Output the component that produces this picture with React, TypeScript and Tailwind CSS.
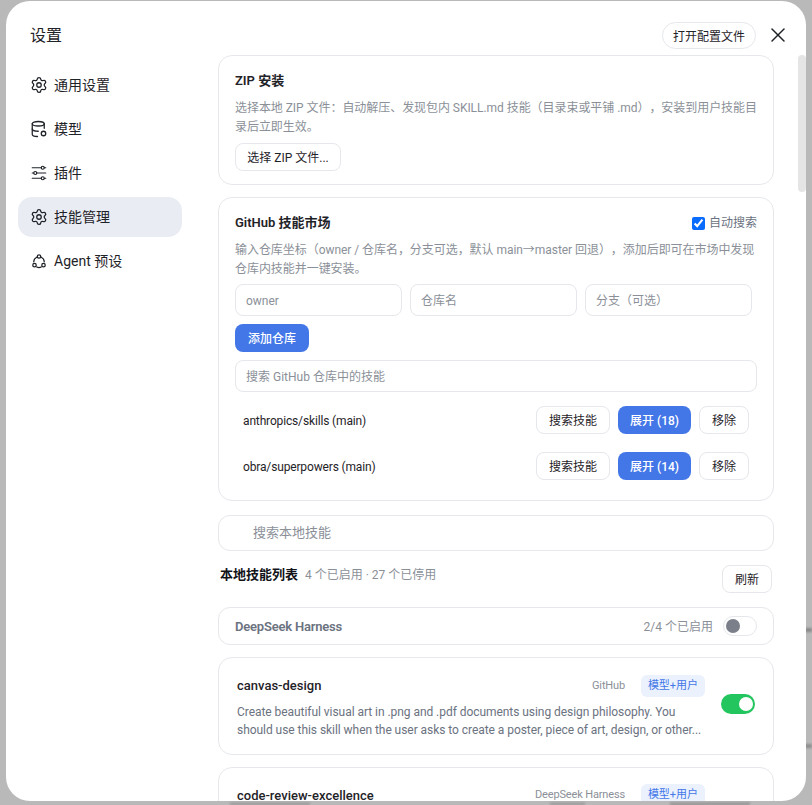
import { Settings, X } from "lucide-react";

const btn = "h-7 pt-[2px] rounded-[8px] border border-[#e5e7eb] bg-white text-xs text-[#1f2328] flex items-center justify-center";
const primary = "h-7 pt-[2px] rounded-[8px] bg-[#4377e8] text-xs font-medium text-white flex items-center justify-center";
const input = "h-8 pt-[2px] rounded-[8px] border border-[#e5e7eb] px-[10px] flex items-center text-xs text-[#8b9098]";

function DbIcon() {
  return (
    <svg width="18" height="18" viewBox="0 0 24 24" fill="none" stroke="currentColor" strokeWidth="1.7" strokeLinecap="round" strokeLinejoin="round">
      <ellipse cx="11" cy="5" rx="8" ry="3" />
      <path d="M3 5v14c0 1.5 3 3 7 3" />
      <path d="M3 12c0 1.5 3.5 3 8 3" />
      <path d="M19 5v6" />
      <circle cx="18" cy="18" r="3" />
    </svg>
  );
}

function SlidersIcon() {
  return (
    <svg width="18" height="18" viewBox="0 0 24 24" fill="none" stroke="currentColor" strokeWidth="1.6" strokeLinecap="round">
      <path d="M3 5h12M19 5h2" />
      <circle cx="17" cy="5" r="2" />
      <path d="M3 12h2M9 12h12" />
      <circle cx="7" cy="12" r="2" />
      <path d="M3 19h12M19 19h2" />
      <circle cx="17" cy="19" r="2" />
    </svg>
  );
}

function AgentIcon() {
  return (
    <svg width="18" height="18" viewBox="0 0 24 24" fill="none" stroke="currentColor" strokeWidth="1.7" strokeLinecap="round">
      <circle cx="12" cy="6" r="2.3" />
      <circle cx="6" cy="17.5" r="2.3" />
      <circle cx="18" cy="17.5" r="2.3" />
      <path d="M9 7A7 7 0 0 0 5 13" />
      <path d="M15 7A7 7 0 0 1 19 13" />
      <path d="M9 20a7 7 0 0 0 6 0" />
    </svg>
  );
}

function NavItem({ icon, label, active }: { icon: React.ReactNode; label: string; active?: boolean }) {
  return (
    <div className={`flex h-10 items-center gap-[6px] rounded-[14px] px-3 text-sm text-[#1f2328] ${active ? "bg-[#e9edf3]" : ""}`}>
      {icon}
      <span>{label}</span>
    </div>
  );
}

function RepoRow({ name, count }: { name: string; count: number }) {
  return (
    <div className="flex h-[46px] items-center justify-between px-2 text-xs text-[#1f2328]">
      <span className="pt-[2px] tracking-[-0.15px]">{name}</span>
      <div className="flex gap-2">
        <div className={`${btn} w-[74px]`}>搜索技能</div>
        <div className={`${primary} w-[73px]`}>展开 ({count})</div>
        <div className={`${btn} w-[50px]`}>移除</div>
      </div>
    </div>
  );
}

function Badges({ source }: { source: string }) {
  return (
    <div className="flex items-center gap-4">
      <span className="text-[11px] tracking-[-0.15px] text-[#8b9098]">{source}</span>
      <span className="flex h-[22px] w-[64px] items-center justify-center rounded-[6px] bg-[#ebf1fd] text-[11px] text-[#4377e8]">模型+用户</span>
    </div>
  );
}

export default function App() {
  return (
    <div
      className="relative h-[805px] w-[812px] overflow-hidden bg-[#b9b9b9] pl-[6px] pt-[1px] [text-spacing-trim:space-all]"
      style={{ fontFamily: 'Roboto, "Noto Sans CJK SC", sans-serif' }}
    >
      {/* blurred desktop showing around the dialog */}
      <div className="absolute left-[804px] top-[628px] h-1 w-2 bg-[#8a8a8a] blur-[1px]" />
      <div className="absolute left-[804px] top-[744px] h-1 w-2 bg-[#8f8f8f] blur-[1px]" />
      <div className="absolute left-[230px] top-[802px] h-1 w-[80px] bg-[#a2a2a2] blur-[1px]" />
      <div className="absolute left-[550px] top-[802px] h-1 w-[35px] bg-[#a2a2a2] blur-[1px]" />
      <div className="absolute left-[670px] top-[802px] h-1 w-[80px] bg-[#9c9c9c] blur-[1px]" />

      <div className="relative flex h-[800px] w-[800px] overflow-hidden rounded-[24px] bg-white">
        <aside className="w-[212px] shrink-0 pl-3 pr-[36px]">
          <div className="pl-3 pt-[24px] text-base leading-[22px] text-[#1f2328]">设置</div>
          <nav className="mt-[18px] flex flex-col gap-1">
            <NavItem icon={<Settings size={18} strokeWidth={1.7} />} label="通用设置" />
            <NavItem icon={<DbIcon />} label="模型" />
            <NavItem icon={<SlidersIcon />} label="插件" />
            <NavItem icon={<Settings size={18} strokeWidth={1.7} />} label="技能管理" active />
            <NavItem icon={<AgentIcon />} label="Agent 预设" />
          </nav>
        </aside>

        <main className="w-[556px] shrink-0">
          <header className="flex h-[54px] items-start justify-end pt-[21px]">
            <div className="mr-[18px] flex h-[27px] w-[94px] items-center justify-center rounded-full border border-[#e5e7eb] pt-[2px] text-xs text-[#1f2328]">打开配置文件</div>
          </header>

          <div className="flex flex-col">
            <section className="h-[130px] rounded-[14px] border border-[#e5e7eb] px-4 pt-[16px]">
              <h3 className="text-[13px] font-semibold leading-[18px] text-[#1f2328]">ZIP 安装</h3>
              <p className="mt-[9px] text-xs leading-[19px] tracking-[-0.05px] text-[#8b9098]">选择本地 ZIP 文件：自动解压、发现包内 SKILL.md 技能（目录束或平铺 .md），安装到用户技能目录后立即生效。</p>
              <div className={`${btn} mt-[6px] w-[106px]`}>选择 ZIP 文件...</div>
            </section>

            <section className="mt-3 h-[304px] rounded-[14px] border border-[#e5e7eb] px-4 pt-[16px]">
              <div className="flex items-center justify-between">
                <h3 className="text-[13px] font-semibold leading-[18px] text-[#1f2328]">GitHub 技能市场</h3>
                <label className="flex items-center gap-1 text-xs text-[#6b7280]">
                  <input type="checkbox" defaultChecked className="m-0 h-[13px] w-[13px] accent-[#0a6cff]" />
                  自动搜索
                </label>
              </div>
              <p className="mt-[9px] text-xs leading-[19px] tracking-[-0.05px] text-[#8b9098]">输入仓库坐标（owner / 仓库名，分支可选，默认 main→master 回退），添加后即可在市场中发现仓库内技能并一键安装。</p>
              <div className="mt-[5px] grid w-[517px] grid-cols-3 gap-2">
                <div className={input}>owner</div>
                <div className={input}>仓库名</div>
                <div className={input}>分支（可选）</div>
              </div>
              <div className={`${primary} mt-2 w-[74px]`}>添加仓库</div>
              <div className={`${input} mt-2`}>搜索 GitHub 仓库中的技能</div>
              <div className="mt-[5px]">
                <RepoRow name="anthropics/skills (main)" count={18} />
                <RepoRow name="obra/superpowers (main)" count={14} />
              </div>
            </section>

            <div className="mt-[14px] flex h-9 items-center rounded-[12px] border border-[#e5e7eb] pl-[34px] text-[13px] text-[#8b9098]">搜索本地技能</div>

            <div className="mt-[14px] flex h-7 items-start justify-between pl-[2px] pr-[2px]">
              <div className="flex h-5 items-center gap-[7px]">
                <span className="text-[13px] font-semibold text-[#111318]">本地技能列表</span>
                <span className="text-xs text-[#8b9098]">4 个已启用 · 27 个已停用</span>
              </div>
              <div className={`${btn} w-[50px]`}>刷新</div>
            </div>

            <div className="mt-[14px] flex h-[38px] items-center justify-between rounded-[12px] border border-[#e5e7eb] pl-4 pr-4">
              <span className="pt-[2px] text-[13px] font-semibold tracking-[-0.2px] text-[#6b7280]">DeepSeek Harness</span>
              <div className="flex items-center gap-[10px]">
                <span className="pt-[2px] text-xs text-[#8b9098]">2/4 个已启用</span>
                <div className="flex h-5 w-[34px] items-center rounded-full border border-[#e5e7eb] pl-[2px]">
                  <div className="h-[14px] w-[14px] rounded-full bg-[#7a7f8a]" />
                </div>
              </div>
            </div>

            <article className="mt-3 flex h-[98px] items-center gap-4 rounded-[14px] border border-[#e5e7eb] pl-[18px] pr-[18px]">
              <div className="mt-[2px] min-w-0 flex-1">
                <div className="flex items-center justify-between">
                  <span className="text-[13px] font-medium text-[#1f2328]">canvas-design</span>
                  <Badges source="GitHub" />
                </div>
                <p className="mt-[6px] text-xs leading-[18px] tracking-[-0.05px] text-[#6b7280]">Create beautiful visual art in .png and .pdf documents using design philosophy. You should use this skill when the user asks to create a poster, piece of art, design, or other...</p>
              </div>
              <div className="mb-1 flex h-5 w-[34px] shrink-0 items-center justify-end rounded-full bg-[#22c55e] pr-[2px]">
                <div className="h-[14px] w-[14px] rounded-full bg-white" />
              </div>
            </article>

            <article className="mt-3 h-[98px] rounded-[14px] border border-[#e5e7eb] pl-[18px] pr-[68px] pt-4">
              <div className="flex items-center justify-between">
                <span className="pt-[2px] text-[13px] font-medium text-[#1f2328]">code-review-excellence</span>
                <Badges source="DeepSeek Harness" />
              </div>
            </article>
          </div>
        </main>

        <button className="absolute right-[16px] top-[22px] text-[#1f2328]">
          <X size={24} strokeWidth={1.5} />
        </button>
        <div className="absolute right-0 top-[54px] h-[137px] w-2 rounded-full bg-[#e5e5e5]" />
      </div>
    </div>
  );
}
